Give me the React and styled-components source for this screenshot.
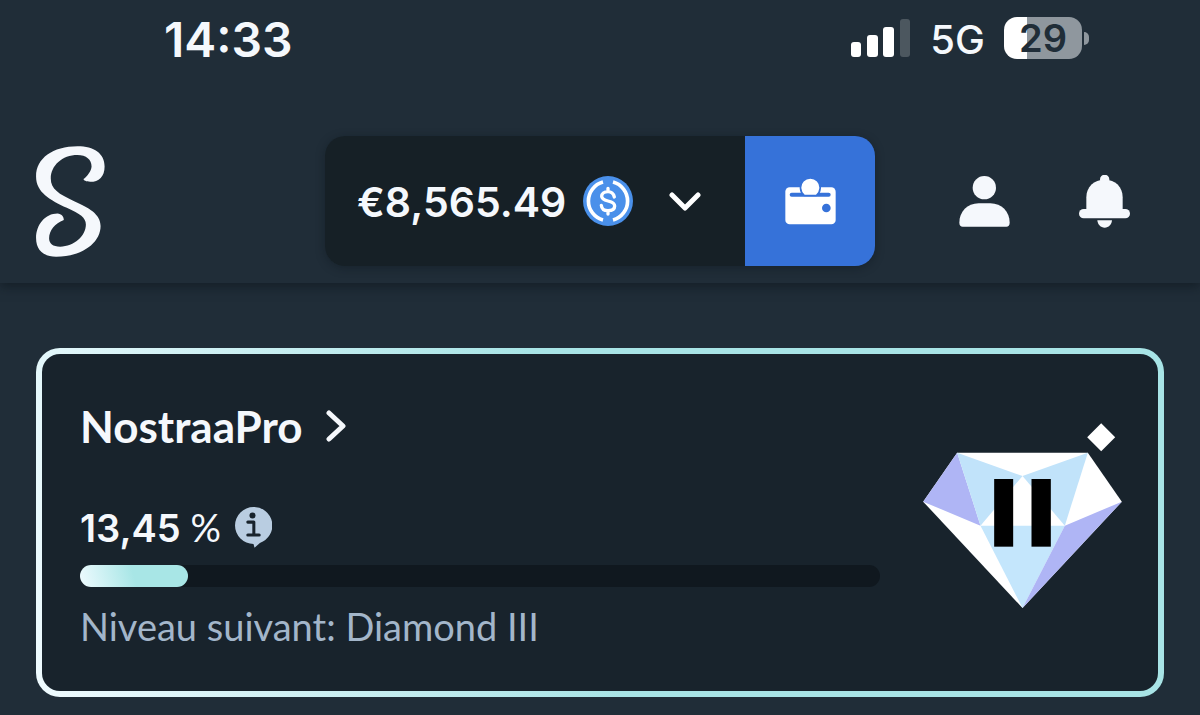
import React from 'react';
import styled, { createGlobalStyle } from 'styled-components';

const GlobalStyle = createGlobalStyle`
  * {
    box-sizing: border-box;
  }

  body {
    margin: 0;
    background-color: #202d38;
    color: #f5f8fc;
    font-family: Lato, "Open Sans", sans-serif;
  }

  button {
    border: 0;
    padding: 0;
    background: none;
    color: inherit;
    font: inherit;
    cursor: pointer;
  }

  svg {
    display: block;
    flex-shrink: 0;
  }
`;

const Header = styled.header`
  box-shadow: 0 4px 10px rgba(10, 18, 24, 0.5);
`;

const StatusBar = styled.div`
  display: flex;
  align-items: center;
  justify-content: space-between;
  height: 80px;
  padding: 0 111px 4px 164px;
  font-family: Inter, sans-serif;
`;

const Time = styled.time`
  padding-top: 4px;
  font-size: 48px;
  font-weight: 600;
  line-height: 48px;
`;

const StatusGroup = styled.div`
  display: flex;
  align-items: center;
  gap: 19px;
`;

const Network = styled.span`
  padding-top: 4px;
  font-size: 40px;
  font-weight: 500;
  line-height: 48px;
`;

const Battery = styled.div`
  display: flex;
  align-items: center;
  gap: 2px;
`;

const BatteryBody = styled.div`
  width: 78px;
  height: 42px;
  border-radius: 13px;
  background: linear-gradient(90deg, #ffffff 29%, #8f979e 29%);
  color: #202d38;
  font-size: 38px;
  font-weight: 600;
  line-height: 42px;
  text-align: center;
`;

const BatteryTip = styled.div`
  width: 5px;
  height: 13px;
  border-radius: 0 6px 6px 0;
  background-color: #8f979e;
`;

const Toolbar = styled.div`
  display: grid;
  grid-template-columns: 1fr auto 1fr;
  align-items: center;
  padding: 56px 36px 17px;
`;

const HomeLink = styled.a`
  justify-self: start;
  color: inherit;
`;

const WalletGroup = styled.div`
  display: flex;
  height: 130px;
  border-radius: 20px;
  overflow: hidden;
  box-shadow: 0 2px 10px rgba(10, 18, 24, 0.35);
`;

const BalanceButton = styled.button`
  display: flex;
  align-items: center;
  width: 420px;
  padding: 0 44px 0 32px;
  background-color: #162026;
`;

const Amount = styled.span`
  flex: 1;
  padding-top: 2px;
  text-align: left;
  font-family: Inter, sans-serif;
  font-size: 41px;
  font-weight: 600;
`;

const CoinSlot = styled.span`
  margin-right: 36px;
`;

const WalletButton = styled.button`
  display: flex;
  align-items: center;
  justify-content: center;
  width: 130px;
  background-color: #3672d9;
`;

const Actions = styled.nav`
  display: flex;
  justify-content: flex-end;
`;

const IconButton = styled.button`
  display: flex;
  align-items: center;
  justify-content: center;
  width: 120px;
  height: 120px;
`;

const Main = styled.main`
  padding: 65px 36px 18px;
`;

const RankCard = styled.section`
  display: flex;
  align-items: flex-start;
  gap: 43px;
  padding: 48px 36px 41px 38px;
  border: 6px solid transparent;
  border-radius: 24px;
  background:
    linear-gradient(#18232c, #18232c) padding-box,
    linear-gradient(75deg, #effbff, #a8e4e6 48%) border-box;
`;

const RankInfo = styled.div`
  flex: 1;
`;

const RankBadge = styled.div`
  padding-top: 21px;
`;

const UserLink = styled.a`
  display: flex;
  align-items: center;
  gap: 24px;
  color: inherit;
  font-size: 44px;
  font-weight: 700;
  line-height: 48px;
  text-decoration: none;
`;

const PercentRow = styled.div`
  display: flex;
  align-items: center;
  gap: 14px;
  height: 50px;
  margin-top: 52px;
  font-size: 38px;
  line-height: 50px;
`;

const Percent = styled.span`
  font-family: Inter, sans-serif;
  font-weight: 600;
`;

const Track = styled.div`
  height: 22px;
  margin-top: 13px;
  border-radius: 11px;
  background-color: #10181f;
`;

const Fill = styled.div`
  height: 100%;
  border-radius: 11px;
  background: linear-gradient(75deg, #effbff, #a8e6e6 50%);
`;

const NextLevel = styled.p`
  margin: 15px 0 0;
  color: #a3b6ca;
  font-size: 38px;
  line-height: 48px;
`;

const Signal = () => (
  <svg width="60" height="38" viewBox="0 0 60 38" fill="#fff" aria-hidden="true">
    <rect x="0" y="23" width="10" height="15" rx="3" />
    <rect x="16" y="16" width="11" height="22" rx="3" />
    <rect x="32" y="8" width="11" height="30" rx="3" />
    <rect x="49" y="0" width="10" height="38" rx="3" opacity="0.2" />
  </svg>
);

const Logo = () => (
  <svg width="69" height="111" viewBox="108 77 206 332" fill="currentColor" aria-hidden="true">
    <path d="M250 176C262 166 273 152 274 138C274 118 258 104 232 104C186 104 152 136 152 174C152 206 176 220 222 242C266 262 301 280 301 316C301 366 246 408 168 408C130 408 108 388 108 352C108 312 136 279 172 279C184 280 191 288 191 298C164 308 147 330 147 353C147 369 158 378 180 378C222 378 257 346 257 312C257 292 240 280 200 262C150 238 108 216 108 168C108 114 158 78 232 78C282 78 313 100 313 138C313 168 296 184 270 184C258 184 250 180 250 176Z" />
  </svg>
);

const Coin = () => (
  <svg width="50" height="50" viewBox="39 168 150 150" fill="none" stroke="#fff" strokeLinecap="round" aria-hidden="true">
    <circle cx="114" cy="243" r="75" fill="#4a90ea" stroke="none" />
    <path strokeWidth="11" strokeLinecap="butt" d="M99 186A59 59 0 0 0 99 300M129 186A59 59 0 0 1 129 300" />
    <path strokeWidth="10" d="M133 231C130 219 122 215 114 215C102 215 95 221 95 229C95 237 102 240 114 243C127 246 134 250 134 258C134 267 126 272 114 272C102 272 95 266 94 256M114 205v10M114 272v10" />
  </svg>
);

const ChevronDown = () => (
  <svg width="32" height="19" viewBox="0 0 32 19" fill="none" stroke="#fff" strokeWidth="5" strokeLinecap="round" strokeLinejoin="round" aria-hidden="true">
    <path d="M3 3L16 16L29 3" />
  </svg>
);

const ChevronRight = () => (
  <svg width="20" height="33" viewBox="0 0 20 33" fill="none" stroke="#f5f8fc" strokeWidth="5" strokeLinecap="round" strokeLinejoin="round" aria-hidden="true">
    <path d="M3 3L17 16L3 29" />
  </svg>
);

const WalletIcon = () => (
  <svg width="51" height="47" viewBox="644 173 153 141" fill="#fff" aria-hidden="true">
    <rect x="645" y="201" width="151" height="111" rx="13" />
    <rect x="658" y="217" width="123" height="12" rx="6" fill="#3672d9" />
    <path stroke="#3672d9" strokeWidth="10" paintOrder="stroke" d="M703 223A27 27 0 1 1 737 223Z" />
    <circle cx="768" cy="263" r="13" fill="#3672d9" />
  </svg>
);

const UserIcon = () => (
  <svg width="51" height="51" viewBox="87 77 153 153" fill="currentColor" aria-hidden="true">
    <circle cx="163" cy="112" r="35" />
    <path d="M98 229C92 229 88 225 88 217C88 184 112 159 146 159H181C215 159 239 184 239 217C239 225 235 229 229 229Z" />
  </svg>
);

const BellIcon = () => (
  <svg width="51" height="53" viewBox="447 71 153 159" fill="currentColor" aria-hidden="true">
    <circle cx="524" cy="84" r="14" />
    <path d="M469 180V138C469 106 492 85 524 85C556 85 578 106 578 138V180Z" />
    <rect x="447" y="173" width="153" height="28" rx="14" />
    <path d="M502 207H546C545 220 536 229 524 229C512 229 503 220 502 207Z" />
  </svg>
);

const InfoIcon = () => (
  <svg width="37" height="41" viewBox="646 54 110 122" aria-hidden="true">
    <path fill="#b9cde1" d="M701 54A55 55 0 0 1 720 161L704 175L701 164A55 55 0 1 1 701 54Z" />
    <circle cx="698" cy="79" r="9" fill="#18232c" />
    <path fill="none" stroke="#18232c" strokeWidth="9" strokeLinecap="round" strokeLinejoin="round" d="M684 99H702V137M684 137H718" />
  </svg>
);

const Gem = () => (
  <svg width="199" height="185" viewBox="68 69 596 555" role="img" aria-label="Diamond II">
    <polygon fill="#fff" points="170,158 562,158 664,305 366,624 68,305" />
    <polygon fill="#afb5f5" points="170,158 68,305 240,377" />
    <polygon fill="#c1e3fa" points="170,158 240,377 366,228" />
    <polygon fill="#c1e3fa" points="562,158 493,377 366,228" />
    <polygon fill="#c4e6fc" points="240,377 493,377 366,624" />
    <polygon fill="#afb5f5" points="493,377 664,305 366,624" />
    <polygon fill="#fff" points="602,70 644,112 602,154 560,112" />
    <rect x="281" y="237" width="57" height="203" />
    <rect x="393" y="237" width="58" height="203" />
  </svg>
);

function App() {
  const progress = 13.45;

  return (
    <>
      <GlobalStyle />
      <Header>
        <StatusBar>
          <Time>14:33</Time>
          <StatusGroup>
            <Signal />
            <Network>5G</Network>
            <Battery>
              <BatteryBody>29</BatteryBody>
              <BatteryTip />
            </Battery>
          </StatusGroup>
        </StatusBar>
        <Toolbar>
          <HomeLink href="#" aria-label="Accueil">
            <Logo />
          </HomeLink>
          <WalletGroup>
            <BalanceButton>
              <Amount>€8,565.49</Amount>
              <CoinSlot>
                <Coin />
              </CoinSlot>
              <ChevronDown />
            </BalanceButton>
            <WalletButton aria-label="Portefeuille">
              <WalletIcon />
            </WalletButton>
          </WalletGroup>
          <Actions>
            <IconButton aria-label="Profil">
              <UserIcon />
            </IconButton>
            <IconButton aria-label="Notifications">
              <BellIcon />
            </IconButton>
          </Actions>
        </Toolbar>
      </Header>
      <Main>
        <RankCard>
          <RankInfo>
            <UserLink href="#">
              NostraaPro
              <ChevronRight />
            </UserLink>
            <PercentRow>
              <span>
                <Percent>13,45</Percent> %
              </span>
              <InfoIcon />
            </PercentRow>
            <Track role="progressbar" aria-label="Progression" aria-valuenow={progress} aria-valuemin={0} aria-valuemax={100}>
              <Fill style={{ width: `${progress}%` }} />
            </Track>
            <NextLevel>Niveau suivant: Diamond III</NextLevel>
          </RankInfo>
          <RankBadge>
            <Gem />
          </RankBadge>
        </RankCard>
      </Main>
    </>
  );
}

export default App;
